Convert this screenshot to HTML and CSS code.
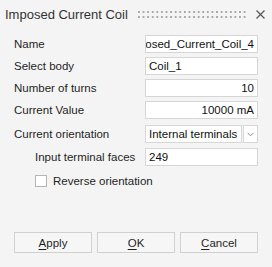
FILE: index.html
```html
<!DOCTYPE html>
<html>
<head>
<meta charset="utf-8">
<link rel="stylesheet" href="styles.css">
</head>
<body>
<div class="dialog">
  <div class="titlebar">
    <span class="title">Imposed Current Coil</span>
    <span class="grip"></span>
    <svg class="close" width="9" height="9" viewBox="0 0 9 9"><path d="M0.5 0.5L8.5 8.5M8.5 0.5L0.5 8.5" stroke="#5a5a5a" stroke-width="1.3" fill="none"/></svg>
  </div>
  <div class="form">
    <div class="row">
      <span class="label">Name</span>
      <div class="field scrolled"><span>Imposed_Current_Coil_4</span></div>
    </div>
    <div class="row">
      <span class="label">Select body</span>
      <div class="field">Coil_1</div>
    </div>
    <div class="row">
      <span class="label">Number of turns</span>
      <div class="field right">10</div>
    </div>
    <div class="row">
      <span class="label">Current Value</span>
      <div class="field right">10000 mA</div>
    </div>
    <div class="row row-select">
      <span class="label">Current orientation</span>
      <div class="select">
        <div class="field select-text">Internal terminals</div>
        <div class="arrow"><svg width="7" height="5" viewBox="0 0 7 5"><path d="M0.5 0.8L3.5 3.8L6.5 0.8" stroke="#8a8a8a" stroke-width="1" fill="none"/></svg></div>
      </div>
    </div>
    <div class="row">
      <span class="label indent">Input terminal faces</span>
      <div class="field">249</div>
    </div>
    <div class="check-row">
      <span class="checkbox"></span>
      <span class="check-label">Reverse orientation</span>
    </div>
  </div>
  <div class="buttons">
    <button class="btn"><u>A</u>pply</button>
    <button class="btn"><u>O</u>K</button>
    <button class="btn"><u>C</u>ancel</button>
  </div>
</div>
</body>
</html>
```
FILE: styles.css
```css
html, body {
  margin: 0;
  padding: 0;
  background: #f4f4f4;
}
.dialog {
  width: 272px;
  height: 267px;
  font-family: "Liberation Sans", Arial, sans-serif;
  font-size: 11.5px;
  color: #1f1f1f;
  display: flex;
  flex-direction: column;
}
.titlebar {
  height: 29px;
  display: flex;
  align-items: center;
  padding: 0 7px 0 5px;
  box-sizing: border-box;
}
.title {
  font-size: 13px;
  color: #333;
  white-space: nowrap;
}
.grip {
  flex: 1;
  height: 7px;
  margin: 0 9px 0 10px;
  background-image: radial-gradient(circle at 1px 1px, #a8a8a8 0.8px, transparent 1.1px);
  background-size: 4.6px 5px;
}
.close {
  display: block;
}
.form {
  padding: 6px 14px 0 14px;
  display: flex;
  flex-direction: column;
  gap: 4px;
}
.row {
  display: flex;
  align-items: center;
  height: 18px;
}
.row-select {
  margin-top: 2px;
  margin-bottom: 1px;
  height: 18px;
}
.label {
  width: 131px;
  white-space: nowrap;
}
.label.indent {
  padding-left: 21px;
  box-sizing: border-box;
}
.field {
  flex: 1;
  height: 18px;
  box-sizing: border-box;
  border: 1px solid #d6d6d6;
  background: #fff;
  color: #111;
  padding: 0 3px;
  display: flex;
  align-items: center;
  white-space: nowrap;
  overflow: hidden;
}
.field.right {
  justify-content: flex-end;
}
.field.scrolled {
  justify-content: flex-end;
}
.field.scrolled span {
  flex: none;
}
.select {
  flex: 1;
  display: flex;
  gap: 1px;
}
.select-text {
  flex: 1;
}
.arrow {
  width: 15px;
  height: 18px;
  box-sizing: border-box;
  border: 1px solid #d6d6d6;
  background: #fff;
  display: flex;
  align-items: center;
  justify-content: center;
}
.arrow svg {
  display: block;
}
.check-row {
  display: flex;
  align-items: center;
  padding-left: 21px;
  margin-top: 4px;
  height: 14px;
}
.checkbox {
  width: 12px;
  height: 12px;
  box-sizing: border-box;
  border: 1px solid #b4b4b4;
  background: #fff;
  margin-right: 6px;
}
.check-label {
  white-space: nowrap;
}
.buttons {
  margin-top: auto;
  margin-bottom: 14px;
  padding: 0 14px;
  display: flex;
  gap: 5px;
}
.btn {
  flex: 1;
  height: 21px;
  border: 1px solid #d0d0d0;
  background: #f6f6f6;
  font-family: "Liberation Sans", Arial, sans-serif;
  font-size: 11.5px;
  color: #1f1f1f;
  padding: 0;
  border-radius: 0;
}
.btn u {
  text-decoration-thickness: 1px;
  text-underline-offset: 2px;
}
```
